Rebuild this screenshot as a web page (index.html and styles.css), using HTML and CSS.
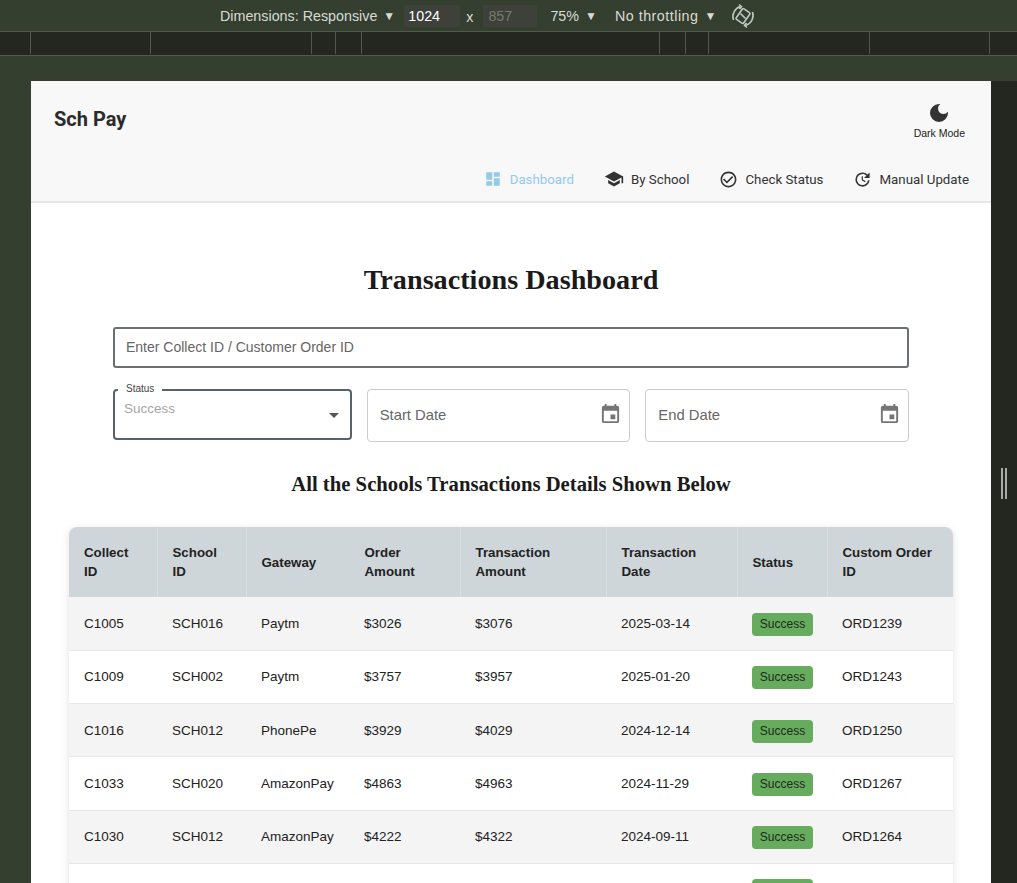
FILE: index.html
```html
<!DOCTYPE html>
<html lang="en">
<head>
<meta charset="utf-8">
<title>Sch Pay</title>
<link rel="stylesheet" href="styles.css">
</head>
<body>
<div class="devbar">
  <span class="devlabel">Dimensions: Responsive</span><span class="caret">▼</span>
  <span class="dim">1024</span><span class="times">x</span><span class="dim dim-off">857</span>
  <span class="devlabel zoomlabel">75%</span><span class="caret">▼</span>
  <span class="devlabel throttle">No throttling</span><span class="caret">▼</span>
  <svg class="rotate" width="24" height="26" viewBox="0 0 24 26" fill="none" stroke="#c4c8c2" stroke-width="1.600"><rect x="7.500" y="6.500" width="9" height="13" rx="1.200" transform="rotate(35 12 13)"/><path d="M9.500 10.500l5 5M2.500 17a10.500 10.500 0 0 1 7-13.500M21.500 9a10.500 10.500 0 0 1-7 13.500"/><path d="M8 1.500l2.500 2-2 2.500M16 24.500l-2.500-2 2-2.500"/></svg>
</div>
<div class="ruler">
  <svg width="1017" height="23" class="ticks" stroke="#4f5a4a"><path d="M30.500 0v22M150.500 0v22M311.500 0v22M335.500 0v22M361.500 0v22M659.500 0v22M685.500 0v22M708.500 0v22M869.500 0v22M989.500 0v22"/></svg>
</div>
<div class="stage">
  <div class="viewport">
    <header class="appbar">
      <div class="apptop">
        <div class="brand">Sch Pay</div>
        <div class="theme">
          <svg width="24" height="24" viewBox="0 0 24 24" fill="#333"><path d="M12 3a9 9 0 1 0 9 9c0-.46-.04-.92-.1-1.360a5.390 5.390 0 0 1-4.400 2.260 5.400 5.400 0 0 1-3.140-9.800c-.44-.06-.9-.1-1.360-.1z"/></svg>
          <span>Dark Mode</span>
        </div>
      </div>
      <nav class="nav">
        <a class="navitem active"><svg width="18" height="18" viewBox="0 0 24 24" fill="#94c9e8"><path d="M3 13h8V3H3zm0 8h8v-6H3zm10 0h8V11h-8zm0-18v6h8V3z"/></svg>Dashboard</a>
        <a class="navitem"><svg width="20" height="20" viewBox="0 0 24 24" fill="#333"><path d="M5 13.180v4L12 21l7-3.820v-4L12 17zM12 3 1 9l11 6 9-4.910V17h2V9z"/></svg>By School</a>
        <a class="navitem"><svg width="19" height="19" viewBox="0 0 24 24" fill="#333"><path d="M16.590 7.580 10 14.170l-3.590-3.580L5 12l5 5 8-8zM12 2C6.480 2 2 6.480 2 12s4.480 10 10 10 10-4.480 10-10S17.520 2 12 2m0 18c-4.420 0-8-3.580-8-8s3.580-8 8-8 8 3.580 8 8-3.580 8-8 8"/></svg>Check Status</a>
        <a class="navitem"><svg width="19" height="19" viewBox="0 0 24 24" fill="#333"><path d="M11 8v5l4.250 2.520.77-1.280-3.520-2.090V8zm10 2V3l-2.640 2.640A8.960 8.960 0 0 0 12 3a9 9 0 1 0 8.950 10h-2.020A7 7 0 1 1 12 5c1.930 0 3.680.79 4.950 2.050L14 10z"/></svg>Manual Update</a>
      </nav>
    </header>
    <main class="content">
      <h1>Transactions Dashboard</h1>
      <div class="search">Enter Collect ID / Customer Order ID</div>
      <div class="filters">
        <div class="field status">
          <span class="legend">Status</span>
          <span class="statusval">Success</span>
          <svg class="drop" width="24" height="24" viewBox="0 0 24 24" fill="#555"><path d="m7 10 5 5 5-5z"/></svg>
        </div>
        <div class="field date start"><span>Start Date</span><svg class="cal" width="23" height="23" viewBox="0 0 24 24" fill="#757575"><path d="M19 4h-1V2h-2v2H8V2H6v2H5c-1.110 0-2 .9-2 2v14a2 2 0 0 0 2 2h14c1.100 0 2-.9 2-2V6c0-1.100-.9-2-2-2m0 16H5V9h14zM12 13h5v5h-5z"/></svg></div>
        <div class="field date end"><span>End Date</span><svg class="cal" width="23" height="23" viewBox="0 0 24 24" fill="#757575"><path d="M19 4h-1V2h-2v2H8V2H6v2H5c-1.110 0-2 .9-2 2v14a2 2 0 0 0 2 2h14c1.100 0 2-.9 2-2V6c0-1.100-.9-2-2-2m0 16H5V9h14zM12 13h5v5h-5z"/></svg></div>
      </div>
      <h2>All the Schools Transactions Details Shown Below</h2>
      <div class="tablewrap">
        <table>
          <colgroup><col class="c1"><col class="c2"><col class="c3"><col class="c4"><col class="c5"><col class="c6"><col class="c7"><col class="c8"></colgroup>
          <thead><tr><th>Collect ID</th><th>School ID</th><th>Gateway</th><th>Order Amount</th><th>Transaction Amount</th><th>Transaction Date</th><th>Status</th><th>Custom Order ID</th></tr></thead>
          <tbody>
            <tr><td>C1005</td><td>SCH016</td><td>Paytm</td><td>$3026</td><td>$3076</td><td>2025-03-14</td><td><span class="badge">Success</span></td><td>ORD1239</td></tr>
            <tr><td>C1009</td><td>SCH002</td><td>Paytm</td><td>$3757</td><td>$3957</td><td>2025-01-20</td><td><span class="badge">Success</span></td><td>ORD1243</td></tr>
            <tr><td>C1016</td><td>SCH012</td><td>PhonePe</td><td>$3929</td><td>$4029</td><td>2024-12-14</td><td><span class="badge">Success</span></td><td>ORD1250</td></tr>
            <tr><td>C1033</td><td>SCH020</td><td>AmazonPay</td><td>$4863</td><td>$4963</td><td>2024-11-29</td><td><span class="badge">Success</span></td><td>ORD1267</td></tr>
            <tr><td>C1030</td><td>SCH012</td><td>AmazonPay</td><td>$4222</td><td>$4322</td><td>2024-09-11</td><td><span class="badge">Success</span></td><td>ORD1264</td></tr>
            <tr><td></td><td></td><td></td><td></td><td></td><td></td><td><span class="badge"></span></td><td></td></tr>
          </tbody>
        </table>
      </div>
    </main>
  </div>
  <div class="sidehandle"><i></i><i></i></div>
</div>
</body>
</html>
```
FILE: styles.css
```css
* { box-sizing: border-box; }
html, body { margin: 0; height: 883px; overflow: hidden; }
body { background: #343f30; font-family: "Liberation Sans", Arial, sans-serif; color: #222; }

.devbar { height: 31px; display: flex; align-items: center; padding-left: 220px; color: #d8dbd5; font-family: "Liberation Sans", sans-serif; font-size: 14.300px; background: #343f30; }
.caret { font-size: 12px; margin-left: 6px; }
.dim { width: 56px; height: 22px; margin-left: 9px; padding-left: 4px; line-height: 22px; color: #fff; background: #3d4139; }
.dim-off { width: 54px; margin-left: 10px; padding-left: 5px; color: #77796f; }
.times { margin-left: 6px; margin-top: 3px; }
.zoomlabel { margin-left: 13px; }
.throttle { margin-left: 18px; letter-spacing: 0.500px; }
.rotate { margin-left: 15px; }

.ruler { height: 25px; background: #23271f; border-top: 1px solid #4f5a4a; border-bottom: 1px solid #4f5a4a; }
.ticks { display: block; }

.stage { display: flex; height: 827px; padding-top: 25px; padding-left: 31px; }
.viewport { width: 960px; height: 802px; background: #fff; overflow: hidden; flex: none; }
.sidehandle { width: 26px; height: 802px; background: #23271f; display: flex; justify-content: center; gap: 2px; padding-top: 387px; flex: none; }
.sidehandle i { width: 2px; height: 31px; background: #a8aaa5; }

.appbar { height: 122px; background: #f8f8f8; border-bottom: 2px solid #e6e6e6; padding: 0 22px 0 23px; }
.apptop { display: flex; justify-content: space-between; height: 81px; }
.brand { font-family: Roboto, sans-serif; font-weight: 700; font-size: 20px; padding-top: 26px; color: #2b2b2b; }
.theme { display: flex; flex-direction: column; align-items: center; font-size: 10.500px; color: #222; padding-top: 20px; margin-right: 4px; }
.theme span { margin-top: 2px; }
.nav { display: flex; justify-content: flex-end; gap: 30px; align-items: center; height: 34px; }
.navitem { display: flex; align-items: center; gap: 7px; font-family: Roboto, sans-serif; font-size: 13.300px; color: #333; }
.navitem.active { color: #94c9e8; gap: 8px; }

.content { padding: 0 38px; }
h1 { margin: 0; padding-top: 60px; height: 124px; font-family: "Liberation Serif", serif; font-size: 28.200px; line-height: 34px; font-weight: 700; text-align: center; color: #1a1a1a; }
.search { margin: 0 44px; height: 41px; border: 2px solid #6b6f73; border-radius: 3px; padding-left: 11px; line-height: 36px; font-size: 14px; color: #666; }
.filters { margin: 21px 44px 0; display: flex; gap: 15px; align-items: flex-start; }
.field { position: relative; display: flex; align-items: center; justify-content: space-between; border: 1px solid #ccc; border-radius: 4px; background: #fff; height: 53px; padding: 0 7px 0 12px; font-size: 14.800px; color: #666; }
.date > span { margin-top: -2px; }
.cal { margin-top: -4px; }
.status { width: 239px; height: 51px; border: 2px solid #59626b; padding: 0; }
.date.start { width: 264px; }
.date.end { width: 264px; }
.legend { position: absolute; left: 3px; top: -9px; padding: 0 8px; background: #fff; font-size: 10px; line-height: 13px; color: #444; }
.statusval { position: absolute; left: 9px; top: 10px; font-size: 13.500px; color: #a5a5a5; }
.drop { position: absolute; right: 4px; top: 12px; }
h2 { margin: 0; padding-top: 30px; height: 85px; font-family: "Liberation Serif", serif; font-size: 20.700px; line-height: 24px; font-weight: 700; text-align: center; color: #1a1a1a; }

.tablewrap { border-radius: 8px 8px 0 0; box-shadow: 0 2px 8px rgba(0,0,0,.12); overflow: hidden; width: 884px; }
table { border-collapse: collapse; table-layout: fixed; width: 884px; font-size: 13.500px; }
.c1 { width: 88px; } .c2 { width: 89px; } .c3 { width: 103px; } .c4 { width: 111px; }
.c5 { width: 146px; } .c6 { width: 131px; } .c7 { width: 90px; } .c8 { width: 126px; }
thead tr { background: #cfd6da; height: 70px; }
th { text-align: left; font-weight: 700; font-size: 13.300px; line-height: 19px; padding: 0 15px; color: #222; border-right: 1px solid #d9dfe2; }
th:nth-child(3) { border-right-color: transparent; }
th:last-child { border-right: 0; }
tbody tr { height: 53.250px; border-bottom: 1px solid #e8e8e8; background: #fff; }
tbody tr:nth-child(odd) { background: #f4f4f4; }
td { padding: 0 15px; color: #222; }
.badge { display: inline-block; width: 61px; height: 23px; margin-top: 2px; line-height: 22px; text-align: center; font-size: 12px; background: #66ab5e; border-radius: 4px; color: #1c2b1a; vertical-align: middle; }
```
